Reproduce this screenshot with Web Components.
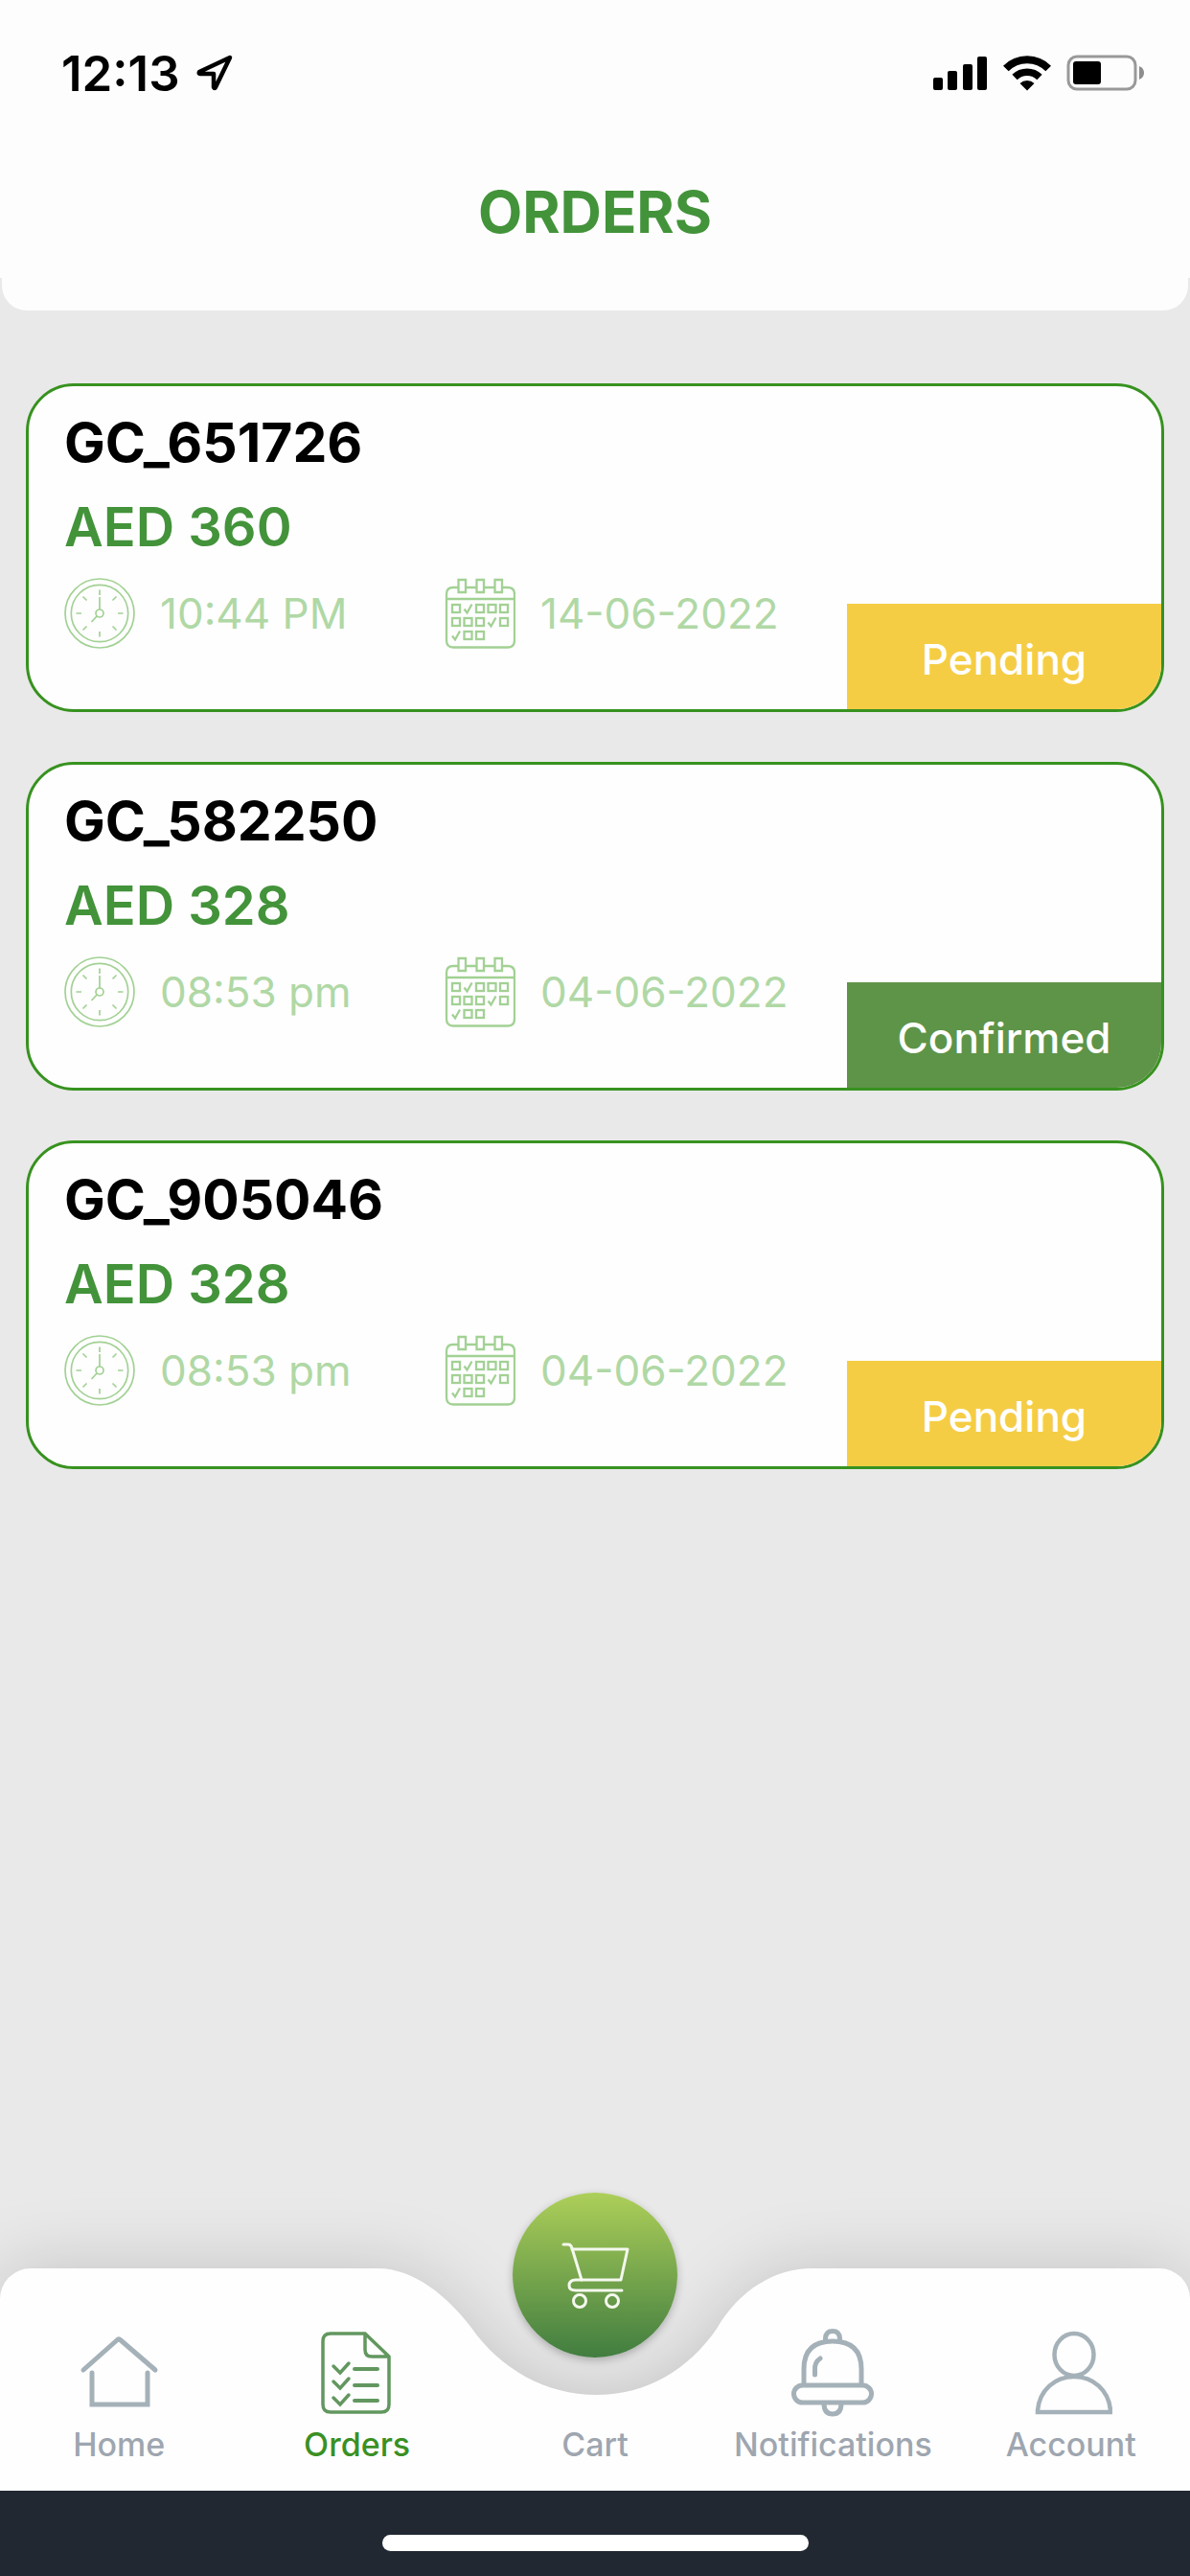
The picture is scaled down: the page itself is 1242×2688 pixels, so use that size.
<!DOCTYPE html>
<html lang="en">
<head>
<meta charset="utf-8">
<meta name="viewport" content="width=device-width, initial-scale=1">
<title>Orders</title>
<style>
  :root {
    --green: #43933a;
    --line: #37921f;
    --pale: #b0d8a5;
    --icon-pale: #a2d194;
    --muted: #9ea6b0;
    --icon-muted: #a5b1b8;
    --surface: #fefefe;
    --page: #e9e9e9;
  }
  body {
    margin: 0;
    background: var(--page);
    font-family: Inter, "Liberation Sans", sans-serif;
  }
</style>
</head>
<body>
<orders-app>
  <status-bar slot="top">12:13</status-bar>
  <page-header slot="top">ORDERS</page-header>

  <order-card number="GC_651726" price="AED 360" time="10:44 PM" date="14-06-2022" status="Pending"></order-card>
  <order-card number="GC_582250" price="AED 328" time="08:53 pm" date="04-06-2022" status="Confirmed"></order-card>
  <order-card number="GC_905046" price="AED 328" time="08:53 pm" date="04-06-2022" status="Pending"></order-card>

  <tab-bar slot="bottom">
    <tab-item icon="home" href="#home">Home</tab-item>
    <tab-item icon="orders" href="#orders" active>Orders</tab-item>
    <tab-item icon="cart" href="#cart">Cart</tab-item>
    <tab-item icon="bell" href="#notifications">Notifications</tab-item>
    <tab-item icon="account" href="#account">Account</tab-item>
  </tab-bar>
  <home-indicator slot="bottom"></home-indicator>
</orders-app>

<script>
  /** OrdersApp - page frame: top bars, a list that grows, bottom bars */
  class OrdersApp extends HTMLElement {
    constructor() {
      super();
      this.attachShadow({ mode: 'open' });
      this.shadowRoot.innerHTML = `
        <style>
          :host {
            display: flex;
            flex-direction: column;
            min-height: 100vh;
          }
          main {
            flex: 1;
            display: flex;
            flex-direction: column;
            gap: 52px;
            padding: 76px 27px;
          }
          footer {
            position: sticky;
            bottom: 0;
          }
        </style>
        <header><slot name="top"></slot></header>
        <main><slot></slot></main>
        <footer><slot name="bottom"></slot></footer>
      `;
    }
  }

  /** StatusBar - clock on the left, signal, wifi and battery on the right */
  class StatusBar extends HTMLElement {
    constructor() {
      super();
      this.attachShadow({ mode: 'open' });
      this.shadowRoot.innerHTML = `
        <style>
          :host {
            display: flex;
            justify-content: space-between;
            align-items: center;
            height: 152px;
            padding: 0 46px 0 64px;
            background: #fdfdfd;
            color: #000;
            font-size: 51px;
            font-weight: 600;
          }
          .group {
            display: flex;
            align-items: center;
            gap: 16px;
          }
          svg {
            display: block;
          }
        </style>
        <div class="group">
          <span><slot></slot></span>
          <svg width="40" height="40" viewBox="0 0 40 40" fill="none" stroke="#000" stroke-width="4.500" stroke-linejoin="round" aria-hidden="true">
            <path d="M36 4 L4 19 Q3 21 5 21 H19 V35 Q20 37 21 35 Z"/>
          </svg>
        </div>
        <div class="group">
          <svg width="57" height="38" viewBox="0 0 57 38" aria-hidden="true">
            <rect x="0" y="24" width="10" height="13" rx="2"/>
            <rect x="15" y="17" width="10" height="20" rx="2"/>
            <rect x="31" y="10" width="10" height="27" rx="2"/>
            <rect x="46" y="2" width="10" height="35" rx="2"/>
          </svg>
          <svg width="50" height="38" viewBox="0 0 50 38" fill="none" stroke="#000" stroke-width="8" aria-hidden="true">
            <path d="M2.800 14.500 A31 31 0 0 1 47.200 14.500"/>
            <path d="M12 23.500 A18.500 18.500 0 0 1 38 23.500" stroke-width="7.500"/>
            <path d="M25 37.500 L17.500 30 A11 11 0 0 1 32.500 30 Z" fill="#000" stroke="none"/>
          </svg>
          <svg width="83" height="38" viewBox="0 0 83 38" aria-hidden="true">
            <rect x="2" y="2" width="70" height="34" rx="9" fill="none" stroke="#999" stroke-width="3"/>
            <rect x="7" y="7" width="29" height="24" rx="3"/>
            <path d="M76 12 Q81 14 81 19 Q81 24 76 26 Z" fill="#8d8d8d"/>
          </svg>
        </div>
      `;
    }
  }

  /** PageHeader - centred title over a lip with rounded bottom corners */
  class PageHeader extends HTMLElement {
    constructor() {
      super();
      this.attachShadow({ mode: 'open' });
      this.shadowRoot.innerHTML = `
        <style>
          :host {
            display: block;
          }
          h1 {
            margin: 0;
            background: #fdfdfd;
            color: var(--green);
            font-size: 60px;
            font-weight: 700;
            line-height: 138px;
            text-align: center;
          }
          .lip {
            height: 34px;
            margin: 0 2px;
            background: #fdfdfd;
            border-radius: 0 0 26px 26px;
          }
        </style>
        <h1><slot></slot></h1>
        <div class="lip"></div>
      `;
    }
  }

  const square = (x, y) => `<rect x="${x}" y="${y}" width="8" height="8"/>`;
  const check = (x, y) => `<path d="M${x} ${y + 5} l3 4 l5 -9"/>`;

  const CLOCK = `
    <svg viewBox="0 0 74 74" stroke-width="1.700" aria-hidden="true">
      <circle cx="37" cy="37" r="36"/>
      <circle cx="37" cy="37" r="29.700"/>
      <circle cx="37" cy="37" r="4"/>
      <path d="M37 33 V20 M34 40 L28.500 46"/>
      <path d="M37 12.500 V18 M37 56 V61.500 M12.500 37 H18 M56 37 H61.500 M19.500 19.500 L23.500 23.500 M50.500 50.500 L54.500 54.500 M54.500 19.500 L50.500 23.500 M23.500 50.500 L19.500 54.500"/>
    </svg>`;

  const CALENDAR = `
    <svg viewBox="0 0 74 74" stroke-width="2.300" aria-hidden="true">
      <path d="M14 10 H9 Q2 10 2 17 V65 Q2 72.500 9 72.500 H66 Q73 72.500 73 65 V17 Q73 10 66 10 H60 M22 10 H33 M41 10 H52 M2 22 H73"/>
      <path d="M14.500 2 h7.500 v13 h-7.500 z M33.500 2 h7.500 v13 h-7.500 z M52.500 2 h7.500 v13 h-7.500 z"/>
      ${square(8, 28)}${check(20.5, 27.5)}${square(33, 28)}${square(45.5, 28)}${square(58, 28)}
      ${square(8, 42)}${square(20.5, 42)}${square(33, 42)}${check(45.5, 41.5)}${square(58, 42)}
      ${check(8, 55.5)}${square(20.5, 56)}${square(33, 56)}
    </svg>`;

  /** OrderCard - one order; a badge in the corner carries its status */
  class OrderCard extends HTMLElement {
    connectedCallback() {
      if (this.shadowRoot) return;
      this.attachShadow({ mode: 'open' });
      this.shadowRoot.innerHTML = `
        <style>
          :host {
            display: block;
          }
          article {
            display: flex;
            justify-content: space-between;
            background: var(--surface);
            border: 3px solid var(--line);
            border-radius: 50px;
            overflow: hidden;
          }
          .info {
            padding: 15px 0 63px 37px;
          }
          h2, .price {
            margin: 0;
            font-size: 57px;
            font-weight: 700;
            line-height: 88px;
            color: #000;
          }
          .price {
            color: var(--green);
            font-size: 56px;
            font-weight: 600;
          }
          .meta {
            display: flex;
            margin-top: 9px;
            color: var(--pale);
            font-size: 44px;
            font-weight: 400;
          }
          .meta span {
            display: flex;
            align-items: center;
            gap: 26px;
            white-space: nowrap;
          }
          .meta span:first-child {
            width: 397px;
          }
          svg {
            flex: none;
            width: 74px;
            height: 74px;
            fill: none;
            stroke: var(--icon-pale);
          }
          .badge {
            flex: none;
            align-self: flex-end;
            box-sizing: border-box;
            width: 328px;
            padding-top: 6px;
            background: #f5cd45;
            color: #fff;
            font-size: 44px;
            font-weight: 500;
            line-height: 104px;
            text-align: center;
          }
          .badge.confirmed {
            background: #5e9448;
          }
        </style>
        <article>
          <div class="info">
            <h2></h2>
            <p class="price"></p>
            <div class="meta">
              <span>${CLOCK}<time class="time"></time></span>
              <span>${CALENDAR}<time class="date"></time></span>
            </div>
          </div>
          <div class="badge"></div>
        </article>
      `;

      const status = this.getAttribute('status') || '';
      this.#fill('h2', this.getAttribute('number'));
      this.#fill('.price', this.getAttribute('price'));
      this.#fill('.time', this.getAttribute('time'));
      this.#fill('.date', this.getAttribute('date'));
      this.#fill('.badge', status);
      this.shadowRoot.querySelector('.badge').classList.add(status.toLowerCase());
    }

    #fill(selector, text) {
      this.shadowRoot.querySelector(selector).textContent = text || '';
    }
  }

  /** TabBar - white bar with a dip in the middle for the cart button */
  class TabBar extends HTMLElement {
    constructor() {
      super();
      this.attachShadow({ mode: 'open' });
      this.shadowRoot.innerHTML = `
        <style>
          :host {
            display: grid;
          }
          .shape, nav {
            grid-area: 1 / 1;
          }
          .shape {
            display: grid;
            grid-template-columns: 1fr 454px 1fr;
            filter: drop-shadow(0 0 36px rgba(0, 0, 0, 0.160));
          }
          .side {
            background: var(--surface);
          }
          .left {
            border-top-left-radius: 32px;
          }
          .right {
            border-top-right-radius: 32px;
          }
          svg {
            display: block;
            width: 454px;
            height: 232px;
            fill: var(--surface);
          }
          nav {
            position: relative;
            display: grid;
            grid-template-columns: repeat(5, 1fr);
            grid-template-rows: 232px;
            align-items: end;
          }
        </style>
        <div class="shape">
          <div class="side left"></div>
          <svg viewBox="0 0 454 232" aria-hidden="true">
            <path d="M0 0 C38 0 73 29 98 62 C128 105 176 132 228 132 C282 132 325 105 354 63 C378 22 415 0 454 0 V232 H0 Z"/>
          </svg>
          <div class="side right"></div>
        </div>
        <nav aria-label="Main"><slot></slot></nav>
      `;
    }
  }

  const ICONS = {
    home: `
      <svg viewBox="0 0 86 92" stroke-width="5" stroke-linecap="round" aria-hidden="true">
        <path d="M6 43 L41 12 Q43 10 45 12 L81 43" stroke-linejoin="round"/>
        <path d="M15 46 V79 H73 V46"/>
      </svg>`,
    orders: `
      <svg viewBox="0 0 86 92" stroke-width="3.500" stroke-linecap="round" aria-hidden="true">
        <path d="M15 5 H51 L76 29 V79 Q76 87 68 87 H15 Q7 87 7 79 V13 Q7 5 15 5 Z M51 5 V22 Q51 29 58 29 H76"/>
        <path d="M18 39 L25 46 L34 36 M18 55 L25 62 L34 52 M18 72 L25 79 L34 69"/>
        <path d="M40 42 H64 M40 59 H64 M40 75 H64" stroke-width="4"/>
      </svg>`,
    bell: `
      <svg viewBox="0 0 86 92" stroke-width="5" stroke-linecap="round" aria-hidden="true">
        <path d="M35.500 13 V10 Q36 2.500 43 2.500 Q50 2.500 50.500 10 V13"/>
        <path d="M13 58 V42 Q13 13 43 13 Q73 13 73 42 V58"/>
        <path d="M24.500 48 V43 Q24 35 30 31"/>
        <rect x="2.500" y="59" width="81" height="18" rx="9"/>
        <path d="M34 78 Q34 89 43 89 Q52 89 52 78"/>
      </svg>`,
    account: `
      <svg viewBox="0 0 86 92" stroke-width="4.500" aria-hidden="true">
        <ellipse cx="46" cy="27" rx="20.500" ry="22"/>
        <path d="M8 87 V85 C10 64 26 50 46 50 C66 50 82 64 84 85 V87 Z"/>
      </svg>`,
    cart: `
      <svg viewBox="0 0 172 172" stroke-width="3" stroke-linecap="round" stroke-linejoin="round" aria-hidden="true">
        <path d="M53 54 H58 Q61 54 62 58 L72 91"/>
        <path d="M62 59 H120 L113 91 H66 Q59 91 59 97 Q59 102 66 102 H114"/>
        <circle cx="70" cy="113" r="6.500"/>
        <circle cx="104" cy="113" r="6.500"/>
      </svg>`
  };

  /** TabItem - icon and label; the cart icon is raised on a round button */
  class TabItem extends HTMLElement {
    connectedCallback() {
      if (this.shadowRoot) return;
      const icon = this.getAttribute('icon');
      this.attachShadow({ mode: 'open' });
      this.shadowRoot.innerHTML = `
        <style>
          :host {
            display: block;
            min-width: 0;
          }
          a {
            display: flex;
            flex-direction: column;
            align-items: center;
            gap: 6px;
            padding-bottom: 25px;
            color: var(--muted);
            font-size: 34px;
            font-weight: 500;
            line-height: 46px;
            text-decoration: none;
          }
          :host([active]) a {
            color: #3a9024;
          }
          svg {
            display: block;
            width: 86px;
            height: 92px;
            fill: none;
            stroke: var(--icon-muted);
          }
          :host([active]) svg {
            stroke: #62975f;
          }
          .round {
            margin-bottom: 62px;
            border-radius: 50%;
            background: linear-gradient(#adcf59, #417d40);
            box-shadow: 0 3px 8px rgba(0, 0, 0, 0.250);
          }
          .round svg {
            width: 172px;
            height: 172px;
            stroke: #f4f8ee;
          }
        </style>
        <a href="${this.getAttribute('href')}">
          <div class="${icon === 'cart' ? 'round' : 'icon'}">${ICONS[icon] || ''}</div>
          <span><slot></slot></span>
        </a>
      `;
    }
  }

  /** HomeIndicator - dark strip with the white grab bar */
  class HomeIndicator extends HTMLElement {
    constructor() {
      super();
      this.attachShadow({ mode: 'open' });
      this.shadowRoot.innerHTML = `
        <style>
          :host {
            position: relative;
            display: flex;
            justify-content: center;
            padding: 46px 0 26px;
            background: #212832;
          }
          div {
            width: 445px;
            height: 17px;
            border-radius: 9px;
            background: #fff;
          }
        </style>
        <div></div>
      `;
    }
  }

  customElements.define('orders-app', OrdersApp);
  customElements.define('status-bar', StatusBar);
  customElements.define('page-header', PageHeader);
  customElements.define('order-card', OrderCard);
  customElements.define('tab-bar', TabBar);
  customElements.define('tab-item', TabItem);
  customElements.define('home-indicator', HomeIndicator);
</script>
</body>
</html>
